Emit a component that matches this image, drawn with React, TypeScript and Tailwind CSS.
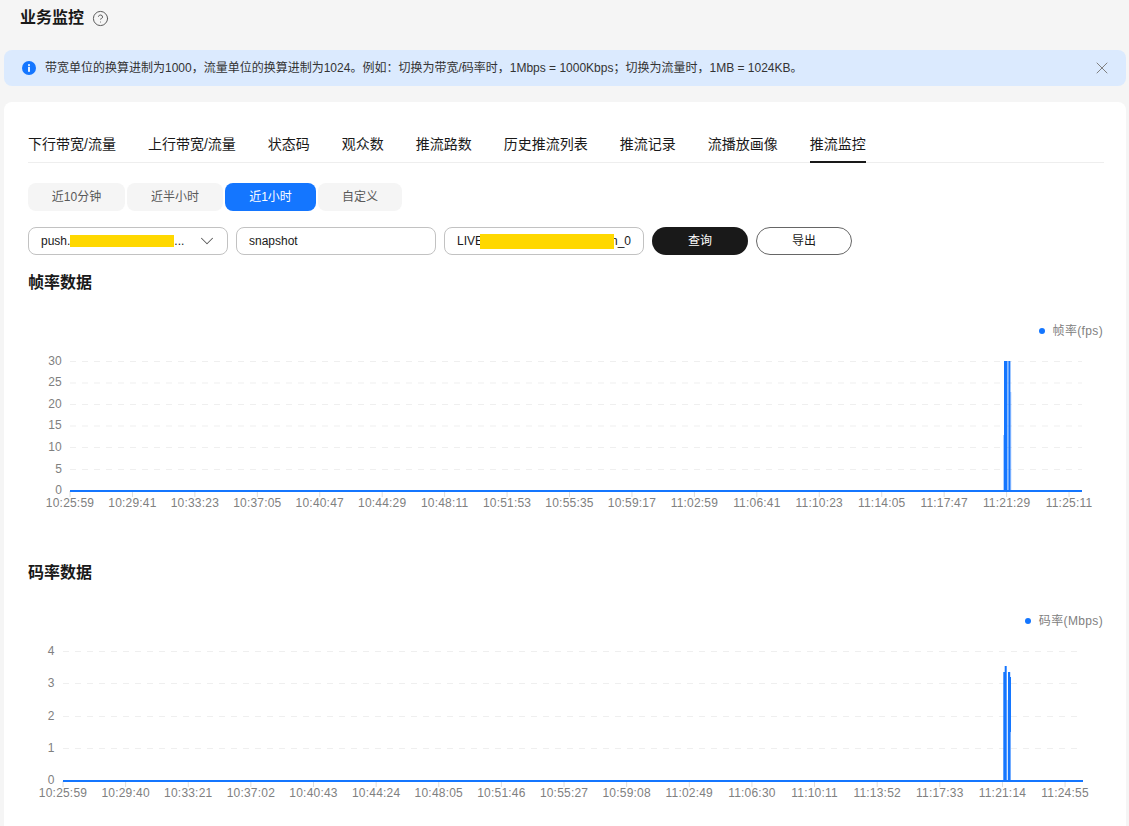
import { ChevronDown, CircleHelp, X } from 'lucide-react';

const tabs = ['下行带宽/流量', '上行带宽/流量', '状态码', '观众数', '推流路数', '历史推流列表', '推流记录', '流播放画像', '推流监控'];

const ranges = [
  { label: '近10分钟', width: 'w-[97px]' },
  { label: '近半小时', width: 'w-[96px]' },
  { label: '近1小时', width: 'w-[91px]', active: true },
  { label: '自定义', width: 'w-[84px]' },
];

const fpsTimes = ['10:25:59', '10:29:41', '10:33:23', '10:37:05', '10:40:47', '10:44:29', '10:48:11', '10:51:53', '10:55:35', '10:59:17', '11:02:59', '11:06:41', '11:10:23', '11:14:05', '11:17:47', '11:21:29', '11:25:11'];
const rateTimes = ['10:25:59', '10:29:40', '10:33:21', '10:37:02', '10:40:43', '10:44:24', '10:48:05', '10:51:46', '10:55:27', '10:59:08', '11:02:49', '11:06:30', '11:10:11', '11:13:52', '11:17:33', '11:21:14', '11:24:55'];

interface ChartProps {
  top: number;
  x0: number;
  x1: number;
  step: number;
  axisY: number;
  labelX: number;
  times: string[];
  rows: { label: string; y: number }[];
  children: React.ReactNode;
}

function Chart({ top, x0, x1, step, axisY, labelX, times, rows, children }: ChartProps) {
  return (
    <svg className="block w-[1076px] h-[176px]" viewBox={`28 ${top} 1076 176`}>
      {rows.map((r) => (
        <g key={r.label}>
          {r.label !== '0' && <line x1={x0} x2={x1} y1={r.y} y2={r.y} stroke="#efefef" strokeDasharray="6 6" />}
          <text x={labelX} y={r.y + 3} textAnchor="end" className="fill-[#808080] text-xs tracking-[0.2px]">{r.label}</text>
        </g>
      ))}
      {times.map((t, i) => {
        const x = x0 + step * i;
        return (
          <g key={t}>
            <line x1={x} x2={x} y1={axisY} y2={axisY + 6} stroke="#dcdcdc" />
            <text x={x} y={axisY + 16} textAnchor="middle" className="fill-[#808080] text-xs tracking-[0.2px]">{t}</text>
          </g>
        );
      })}
      <rect x={x0} y={axisY - 1} width={x1 - x0} height={2} fill="#1476ff" />
      {children}
    </svg>
  );
}

function Legend({ label }: { label: string }) {
  return (
    <div className="mt-[30px] mr-px flex h-4 items-center justify-end gap-2 text-xs tracking-[0.35px] text-[#808080]">
      <span className="h-[6px] w-[6px] rounded-full bg-[#1476ff]" />
      {label}
    </div>
  );
}

export default function App() {
  return (
    <div className="h-[826px] overflow-hidden bg-[#f5f5f5] pl-1 pr-[3px] font-[Liberation_Sans,Noto_Sans_CJK_SC,sans-serif] text-[#191919]">
      {/* Title */}
      <div className="flex h-[36px] items-center gap-2 pl-4">
        <h1 className="text-base font-semibold leading-none">业务监控</h1>
        <CircleHelp className="h-[17px] w-[17px] text-[#595959]" strokeWidth={1.4} />
      </div>

      {/* Notice */}
      <div className="mt-[14px] flex h-9 items-center rounded-lg bg-[#dbeafe] pl-[18px] pr-[14px] text-xs">
        <svg className="h-[14px] w-[14px] shrink-0" viewBox="0 0 14 14">
          <circle cx="7" cy="7" r="7" fill="#1476ff" />
          <rect x="6.1" y="5.8" width="1.8" height="5" fill="#fff" />
          <rect x="6.1" y="3.2" width="1.8" height="1.7" fill="#fff" />
        </svg>
        <span className="ml-[9px] flex-1 text-[#333]">带宽单位的换算进制为1000，流量单位的换算进制为1024。例如：切换为带宽/码率时，1Mbps = 1000Kbps；切换为流量时，1MB = 1024KB。</span>
        <X className="h-5 w-5 text-[#808080]" strokeWidth={1.2} />
      </div>

      {/* Main card */}
      <div className="mt-4 h-[800px] rounded-t-lg bg-white pl-6 pr-[22px] pt-6">
        <div className="flex h-[37px] gap-8 border-b border-[#eee] text-sm">
          {tabs.map((t) => (
            <div
              key={t}
              className={t === '推流监控' ? 'h-[37px] border-b-2 border-[#191919] pt-2 leading-5' : 'pt-2 leading-5'}
            >
              {t}
            </div>
          ))}
        </div>

        <div className="mt-5 flex gap-[2px] text-xs">
          {ranges.map((r) => (
            <div
              key={r.label}
              className={`flex h-7 items-center justify-center rounded-lg ${r.width} ${r.active ? 'bg-[#1476ff] text-white' : 'bg-[#f5f5f5] text-[#595959]'}`}
            >
              {r.label}
            </div>
          ))}
        </div>

        <div className="mt-4 flex gap-2 text-xs">
          <div className="flex h-7 w-[200px] items-center rounded-lg border border-[#c2c2c2] pl-3 pr-[9px]">
            <span className="flex-1 whitespace-nowrap">
              push.<span className="inline-block h-3 w-[104px] bg-[#ffd800] align-[-2px]" />...
            </span>
            <ChevronDown className="h-[22px] w-[22px] text-[#595959]" strokeWidth={1.1} />
          </div>
          <div className="flex h-7 w-[200px] items-center rounded-lg border border-[#c2c2c2] pl-3">snapshot</div>
          <div className="flex h-7 w-[200px] items-center whitespace-nowrap rounded-lg border border-[#c2c2c2] pl-3">
            LIVE<span className="relative z-10 -mx-[3px] inline-block h-[15px] w-[134px] bg-[#ffd800]" />n_0
          </div>
          <button className="h-7 w-24 rounded-full bg-[#191919] text-white">查询</button>
          <button className="h-7 w-24 rounded-full border border-[#666] bg-white">导出</button>
        </div>

        <h2 className="mt-[18px] text-base font-semibold leading-5">帧率数据</h2>
        <Legend label="帧率(fps)" />
        <Chart
          top={339}
          x0={70}
          x1={1082}
          step={62.44}
          axisY={491}
          labelX={62}
          times={fpsTimes}
          rows={[
            { label: '30', y: 361.5 },
            { label: '25', y: 383 },
            { label: '20', y: 404.5 },
            { label: '15', y: 426 },
            { label: '10', y: 447.5 },
            { label: '5', y: 469.5 },
            { label: '0', y: 491 },
          ]}
        >
          <rect x={1003} y={435} width={1} height={56} fill="#1476ff" opacity={0.35} />
          <rect x={1004} y={361} width={3.4} height={130} fill="#1476ff" />
          <rect x={1007.4} y={361} width={1} height={130} fill="#1476ff" opacity={0.25} />
          <rect x={1008.4} y={361} width={2} height={130} fill="#1476ff" />
          <rect x={1010.4} y={392} width={0.8} height={99} fill="#1476ff" opacity={0.5} />
        </Chart>

        <h2 className="mt-[48px] text-base font-semibold leading-5">码率数据</h2>
        <Legend label="码率(Mbps)" />
        <Chart
          top={629}
          x0={63}
          x1={1083}
          step={62.63}
          axisY={781}
          labelX={54.5}
          times={rateTimes}
          rows={[
            { label: '4', y: 651.5 },
            { label: '3', y: 683.5 },
            { label: '2', y: 716.5 },
            { label: '1', y: 748.5 },
            { label: '0', y: 781 },
          ]}
        >
          <path d="M1003.3 781V672H1004.7V666H1006.7V781Z" fill="#1476ff" />
          <rect x={1006.7} y={700} width={0.8} height={81} fill="#1476ff" opacity={0.4} />
          <path d="M1008 781V672H1010.2V677H1011V732H1010.6V781Z" fill="#1476ff" />
        </Chart>
      </div>
    </div>
  );
}
